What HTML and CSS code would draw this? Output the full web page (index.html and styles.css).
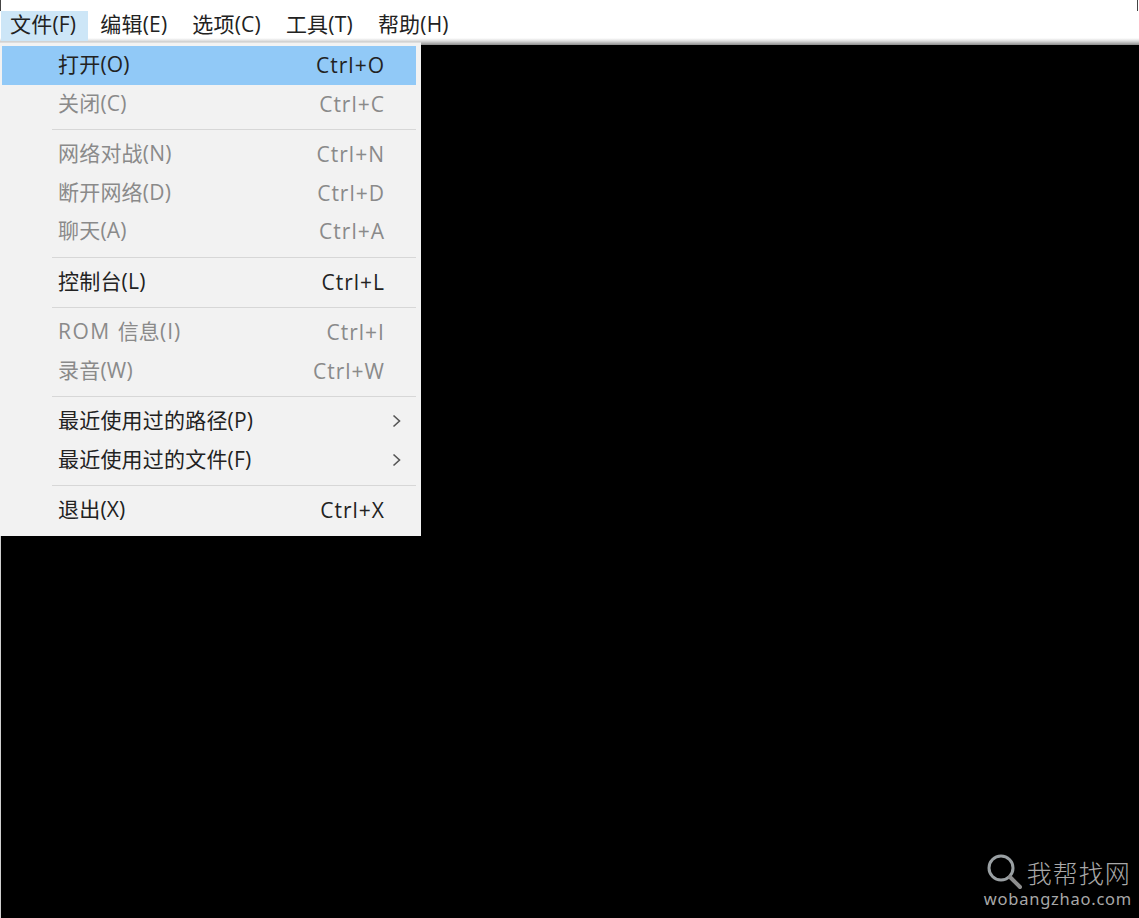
FILE: index.html
```html
<!DOCTYPE html>
<html lang="zh-CN">
<head>
    <meta charset="UTF-8">
    <meta name="viewport" content="width=device-width, initial-scale=1.0">
    <title>模拟器</title>
    <link rel="stylesheet" href="styles.css">
</head>
<body>
    <header class="menubar">
        <span class="top-item active">文件(F)</span>
        <span class="top-item">编辑(E)</span>
        <span class="top-item">选项(C)</span>
        <span class="top-item">工具(T)</span>
        <span class="top-item">帮助(H)</span>
    </header>
    <main class="screen"></main>

    <div class="menu">
        <div class="row hover"><span>打开(O)</span><span class="key">Ctrl+O</span></div>
        <div class="row off"><span>关闭(C)</span><span class="key">Ctrl+C</span></div>
        <div class="sep"></div>
        <div class="row off"><span>网络对战(N)</span><span class="key">Ctrl+N</span></div>
        <div class="row off"><span>断开网络(D)</span><span class="key">Ctrl+D</span></div>
        <div class="row off"><span>聊天(A)</span><span class="key">Ctrl+A</span></div>
        <div class="sep"></div>
        <div class="row"><span>控制台(L)</span><span class="key">Ctrl+L</span></div>
        <div class="sep"></div>
        <div class="row off"><span><span class="rom">ROM </span>信息<span class="rom-end">(I)</span></span><span class="key">Ctrl+I</span></div>
        <div class="row off"><span>录音(W)</span><span class="key">Ctrl+W</span></div>
        <div class="sep"></div>
        <div class="row"><span>最近使用过的路径(P)</span>
            <svg class="arrow" width="10" height="14" viewBox="0 0 10 14"><path d="M1.5 1.5 L7.5 7 L1.5 12.5" fill="none" stroke="#555" stroke-width="1.6"/></svg>
        </div>
        <div class="row"><span>最近使用过的文件(F)</span>
            <svg class="arrow" width="10" height="14" viewBox="0 0 10 14"><path d="M1.5 1.5 L7.5 7 L1.5 12.5" fill="none" stroke="#555" stroke-width="1.6"/></svg>
        </div>
        <div class="sep"></div>
        <div class="row"><span>退出(X)</span><span class="key">Ctrl+X</span></div>
    </div>

    <div class="mark">
        <div class="mark-top">
            <svg width="36" height="36" viewBox="0 0 36 36">
                <circle cx="15" cy="14" r="12" fill="none" stroke="#9aa0a3" stroke-width="3"/>
                <path d="M24 23 L34 33" stroke="#8d8d8d" stroke-width="4" stroke-linecap="round"/>
            </svg>
            <span class="mark-cn">我帮找网</span>
        </div>
        <div class="mark-url">wobangzhao.com</div>
    </div>
</body>
</html>
```

FILE: styles.css
```css
body{
    margin: 0;
    height: 918px;
    overflow: hidden;
    display: flex;
    flex-direction: column;
    background-color: black;
    font: normal 21px "Open Sans", "Noto Sans CJK SC", sans-serif;
    letter-spacing: .2px;
    color: #222;
}
.menubar{
    height: 45px;
    box-sizing: border-box;
    padding: 11px 0 0 1px;
    display: flex;
    align-items: flex-start;
    background: linear-gradient(white 38px, #dcdcdc 41px, #8c8c8c 45px);
    position: relative;
}
/* dark ticks left over at the window's top corners */
.menubar::before, .menubar::after{
    content: "";
    position: absolute;
    top: 0;
    width: 1px;
    height: 11px;
    background-color: #444;
}
.menubar::before{
    left: 0;
}
.menubar::after{
    right: 1px;
}
.top-item{
    height: 30px;
    line-height: 27px;
    padding: 0 11px 0 9px;
    margin-right: 5px;
    white-space: nowrap;
}
.top-item.active{
    background-color: #cde6f7;
    padding-right: 12px;
    margin-right: 3px;
}
.screen{
    flex: 1;
    background-color: black;
    border-left: 1px solid #cfcfcf;
}
.menu{
    position: absolute;
    left: 0;
    top: 42px;
    width: 421px;
    height: 494px;
    box-sizing: border-box;
    padding: 3px 5px 0 2px;
    background-color: #f2f2f2;
    border-top: 1px solid #ddd;
}
.row{
    height: 38.5px;
    box-sizing: border-box;
    padding: 0 31px 2px 56px;
    line-height: 36px;
    display: flex;
    align-items: center;
    justify-content: space-between;
    position: relative;
    white-space: nowrap;
}
.row.hover{
    background-color: #91c9f7;
}
.row.off{
    color: #8a8a8a;
}
.rom{
    letter-spacing: 1.5px;
}
.rom-end{
    letter-spacing: 1px;
}
.key{
    letter-spacing: 1px;
    padding-top: 2px;
}
.arrow{
    position: absolute;
    right: 14px;
    top: 12px;
}
.sep{
    height: 1px;
    margin: 6px 0 5px 50px;
    background-color: #d7d7d7;
}
.mark{
    position: absolute;
    right: 7px;
    bottom: 10px;
    color: #a8a8a8;
}
.mark-top{
    display: flex;
    align-items: center;
    padding-left: 2px;
}
.mark-cn{
    font-size: 25px;
    font-weight: 300;
    letter-spacing: 1px;
    line-height: 33px;
    margin-left: 5px;
    font-family: "Noto Sans CJK SC", sans-serif;
}
.mark-url{
    font: 16.5px "Noto Sans", sans-serif;
    letter-spacing: .75px;
    line-height: 18px;
}
```
